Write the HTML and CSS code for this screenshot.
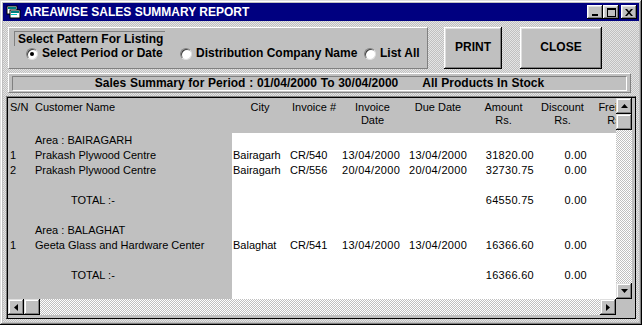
FILE: index.html
```html
<!DOCTYPE html>
<html lang="en">
<head>
    <meta charset="UTF-8">
    <title>Areawise Sales Summary Report</title>
    <link rel="stylesheet" href="styles.css">
</head>
<body>
    <div class="window">
        <div class="titlebar">
            <svg class="app-icon" width="16" height="16" viewBox="0 0 16 16">
                <rect x="1" y="2" width="10" height="8" fill="#fff" stroke="#000" stroke-width="1"/>
                <rect x="2" y="3" width="8" height="2" fill="#008080"/>
                <rect x="4" y="6" width="10" height="8" fill="#fff" stroke="#000" stroke-width="1"/>
                <rect x="5" y="7" width="8" height="2" fill="#008080"/>
                <rect x="5" y="10" width="6" height="1" fill="#00c0c0"/>
            </svg>
            <span class="title">AREAWISE SALES SUMMARY REPORT</span>
            <div class="caps">
                <span class="cap">
                    <svg width="8" height="7" viewBox="0 0 8 7"><rect x="1" y="5" width="6" height="2" fill="#000"/></svg>
                </span>
                <span class="cap">
                    <svg width="9" height="9" viewBox="0 0 9 9"><rect x="0.5" y="0.5" width="8" height="8" fill="none" stroke="#000"/><rect x="0" y="0" width="9" height="2" fill="#000"/></svg>
                </span>
                <span class="cap cap-close">
                    <svg width="8" height="7" viewBox="0 0 8 7"><path d="M0 0h2l2 2.2L6 0h2L5 3.5 8 7H6L4 4.8 2 7H0l3-3.5z" fill="#000"/></svg>
                </span>
            </div>
        </div>

        <div class="client">
            <div class="toprow">
                <div class="group">
                    <div class="group-label">Select Pattern For Listing</div>
                    <div class="radios">
                        <label class="radio r1"><span class="dot on"></span>Select Period or Date</label>
                        <label class="radio r2"><span class="dot"></span>Distribution Company Name</label>
                        <label class="radio r3"><span class="dot"></span>List All</label>
                    </div>
                </div>
                <div class="btn btn-print">PRINT</div>
                <div class="btn btn-close">CLOSE</div>
            </div>

            <div class="periodbar">
                <div class="period-inner">Sales Summary for Period : 01/04/2000 To 30/04/2000<span class="period-gap">All Products In Stock</span></div>
            </div>

            <div class="grid">
                <div class="cells">
                    <div class="row head">
                        <span class="c-sn">S/N</span>
                        <span class="c-name">Customer Name</span>
                        <span class="h">City</span>
                        <span class="h">Invoice #</span>
                        <span class="h">Invoice<br>Date</span>
                        <span class="h">Due Date</span>
                        <span class="h">Amount<br>Rs.</span>
                        <span class="h">Discount<br>Rs.</span>
                        <span class="h">Freight<br>Rs.</span>
                    </div>
                    <div class="body">
                        <div class="row"><span class="c-sn"></span><span class="c-name">Area : BAIRAGARH</span></div>
                        <div class="row">
                            <span class="c-sn">1</span><span class="c-name">Prakash Plywood Centre</span>
                            <span class="c-city">Bairagarh</span><span class="c-inv">CR/540</span>
                            <span class="c-date">13/04/2000</span><span class="c-due">13/04/2000</span>
                            <span class="c-amt">31820.00</span><span class="c-disc">0.00</span>
                        </div>
                        <div class="row">
                            <span class="c-sn">2</span><span class="c-name">Prakash Plywood Centre</span>
                            <span class="c-city">Bairagarh</span><span class="c-inv">CR/556</span>
                            <span class="c-date">20/04/2000</span><span class="c-due">20/04/2000</span>
                            <span class="c-amt">32730.75</span><span class="c-disc">0.00</span>
                        </div>
                        <div class="row"></div>
                        <div class="row">
                            <span class="c-sn"></span><span class="c-name total">TOTAL :-</span>
                            <span></span><span></span><span></span><span></span>
                            <span class="c-amt">64550.75</span><span class="c-disc">0.00</span>
                        </div>
                        <div class="row"></div>
                        <div class="row"><span class="c-sn"></span><span class="c-name">Area : BALAGHAT</span></div>
                        <div class="row">
                            <span class="c-sn">1</span><span class="c-name">Geeta Glass and Hardware Center</span>
                            <span class="c-city">Balaghat</span><span class="c-inv">CR/541</span>
                            <span class="c-date">13/04/2000</span><span class="c-due">13/04/2000</span>
                            <span class="c-amt">16366.60</span><span class="c-disc">0.00</span>
                        </div>
                        <div class="row"></div>
                        <div class="row">
                            <span class="c-sn"></span><span class="c-name total">TOTAL :-</span>
                            <span></span><span></span><span></span><span></span>
                            <span class="c-amt">16366.60</span><span class="c-disc">0.00</span>
                        </div>
                    </div>
                </div>

                <div class="vscroll">
                    <span class="sbtn"><svg width="7" height="4" viewBox="0 0 7 4"><path d="M3.5 0L7 4H0z" fill="#000"/></svg></span>
                    <span class="sbtn thumb"></span>
                    <span class="track"></span>
                    <span class="sbtn"><svg width="7" height="4" viewBox="0 0 7 4"><path d="M0 0h7L3.5 4z" fill="#000"/></svg></span>
                </div>

                <div class="hscroll">
                    <span class="sbtn"><svg width="4" height="7" viewBox="0 0 4 7"><path d="M4 0v7L0 3.5z" fill="#000"/></svg></span>
                    <span class="sbtn thumb"></span>
                    <span class="track"></span>
                    <span class="sbtn"><svg width="4" height="7" viewBox="0 0 4 7"><path d="M0 0l4 3.5L0 7z" fill="#000"/></svg></span>
                </div>

                <div class="corner"></div>
            </div>
        </div>
    </div>
</body>
</html>
```

FILE: styles.css
```css
* {
    margin: 0;
    padding: 0;
    box-sizing: border-box;
}
body {
    width: 642px;
    height: 325px;
    overflow: hidden;
    font-family: "Liberation Sans", Arial, sans-serif;
    color: #000;
    background: #c0c0c0;
}
.window {
    width: 642px;
    height: 325px;
    padding: 3px;
    background: #c0c0c0;
    box-shadow: inset -1px -1px #000, inset 1px 1px #dfdfdf, inset -2px -2px #808080, inset 2px 2px #fff;
    display: flex;
    flex-direction: column;
}

/* title bar */
.titlebar {
    height: 18px;
    background: #000080;
    display: flex;
    align-items: center;
    padding: 0 2px 0 3px;
}
.app-icon {
    flex: none;
}
.title {
    margin-left: 2px;
    color: #fff;
    font-weight: bold;
    font-size: 12px;
    white-space: nowrap;
}
.caps {
    margin-left: auto;
    display: flex;
}
.cap {
    width: 16px;
    height: 14px;
    background: #c0c0c0;
    box-shadow: inset -1px -1px #000, inset 1px 1px #fff, inset -2px -2px #808080, inset 2px 2px #dfdfdf;
    display: flex;
    align-items: center;
    justify-content: center;
}
.cap svg {
    display: block;
}
.cap-close {
    margin-left: 2px;
}

/* client area */
.client {
    flex: 1;
    padding: 6px 0 0 3px;
    background: repeating-conic-gradient(#c0c0c0 0 25%, #e4e4e4 0 50%) 0 0 / 2px 2px;
    display: flex;
    flex-direction: column;
}
.toprow {
    display: flex;
    height: 42px;
    margin-left: 2px;
}
.group {
    width: 420px;
    height: 42px;
    background: #c0c0c0;
    border: 1px solid;
    border-color: #fff #808080 #808080 #fff;
    position: relative;
}
.group-label {
    position: absolute;
    left: 5px;
    top: 3px;
    padding: 1px 2px 0 3px;
    border-top: 1px solid #808080;
    border-left: 1px solid #808080;
    font-weight: bold;
    font-size: 12px;
    line-height: 13px;
    white-space: nowrap;
}
.radios {
    position: absolute;
    left: 17px;
    top: 19px;
    display: flex;
}
.radio {
    display: flex;
    align-items: center;
    font-weight: bold;
    font-size: 12px;
    line-height: 13px;
    white-space: nowrap;
}
.r1 {
    width: 154px;
}
.r2 {
    width: 184px;
}
.dot {
    width: 12px;
    height: 12px;
    margin-right: 4px;
    border-radius: 50%;
    background: #fff;
    border: 1px solid;
    border-color: #808080 #dfdfdf #dfdfdf #808080;
    box-shadow: inset 1px 1px #404040;
    position: relative;
}
.dot.on::after {
    content: '';
    position: absolute;
    left: 3px;
    top: 3px;
    width: 4px;
    height: 4px;
    border-radius: 50%;
    background: #000;
}
.btn {
    height: 42px;
    background: #c0c0c0;
    box-shadow: inset -1px -1px #000, inset 1px 1px #fff, inset -2px -2px #808080, inset 2px 2px #dfdfdf;
    display: flex;
    align-items: center;
    justify-content: center;
    padding-bottom: 2px;
    font-weight: bold;
    font-size: 12px;
}
.btn-print {
    width: 58px;
    margin-left: 16px;
}
.btn-close {
    width: 82px;
    margin-left: 18px;
}

/* period banner */
.periodbar {
    margin: 4px 0 0 2px;
    width: 623px;
    height: 20px;
    padding: 2px 3px;
    background: #c0c0c0;
    border: 1px solid;
    border-color: #fff #808080 #808080 #fff;
}
.period-inner {
    height: 15px;
    border: 1px solid;
    border-color: #808080 #fff #fff #808080;
    text-align: center;
    font-weight: bold;
    font-size: 12px;
    line-height: 13px;
    white-space: nowrap;
    word-spacing: 0.4px;
}
.period-gap {
    margin-left: 24px;
}

/* grid */
.grid {
    margin-top: 3px;
    width: 630px;
    height: 223px;
    border: 1px solid;
    border-color: #808080 #000 #000 #808080;
    background: #c0c0c0;
    display: grid;
    grid-template-columns: 608px 16px;
    grid-template-rows: 201px 16px;
    padding: 1px 2px 2px 1px;
    box-shadow: inset 1px 1px #000;
}
.cells {
    overflow: hidden;
    font-size: 11px;
    background: linear-gradient(to right, #c0c0c0 224px, #fff 224px);
}
.row {
    display: grid;
    grid-template-columns: 25px 199px 56px 52px 65px 66px 65px 53px 53px;
    height: 15px;
    line-height: 15px;
    white-space: nowrap;
}
.head {
    height: 35px;
    padding-top: 3px;
    line-height: 13px;
    background: #c0c0c0;
}
.head .h {
    text-align: center;
}
.c-sn {
    padding-left: 2px;
}
.c-name {
    padding-left: 2px;
}
.c-name.total {
    padding-left: 38px;
}
.c-city {
    padding-left: 1px;
}
.c-inv {
    padding-left: 2px;
}
.c-date {
    padding-left: 2px;
    letter-spacing: 0.3px;
}
.c-due {
    padding-left: 4px;
    letter-spacing: 0.3px;
}
.c-amt,
.c-disc {
    text-align: right;
    padding-right: 2px;
    letter-spacing: 0.3px;
}

/* scrollbars */
.vscroll,
.hscroll {
    display: flex;
}
.vscroll {
    flex-direction: column;
}
.sbtn {
    flex: none;
    width: 16px;
    height: 16px;
    background: #c0c0c0;
    box-shadow: inset -1px -1px #000, inset 1px 1px #dfdfdf, inset -2px -2px #808080, inset 2px 2px #fff;
    display: flex;
    align-items: center;
    justify-content: center;
}
.sbtn svg {
    display: block;
}
.track {
    flex: 1;
    background: repeating-conic-gradient(#fff 0 25%, #c0c0c0 0 50%) 0 0 / 2px 2px;
}
.corner {
    background: #c0c0c0;
}
```
